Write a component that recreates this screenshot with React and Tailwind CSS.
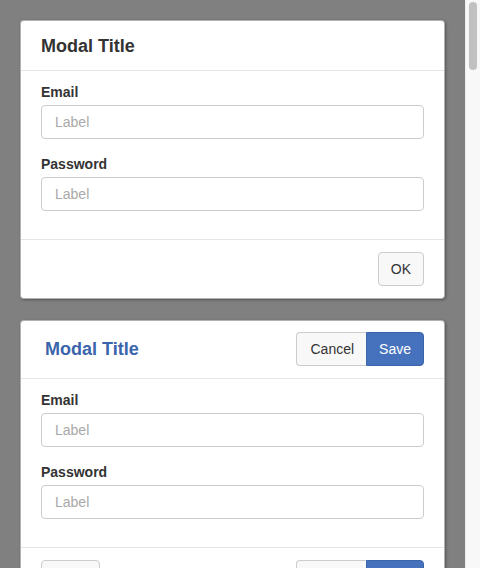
import React from 'react';

const FONT = { fontFamily: '"Liberation Sans", Arial, Helvetica, sans-serif' };

// Variants repeated down the page, like a gallery of modal layouts
const VARIANTS = ['basic', 'actions', 'basic', 'actions', 'basic', 'actions', 'basic', 'actions', 'basic', 'actions', 'basic', 'actions', 'basic', 'actions', 'basic'];

const Button = ({ children, primary, className = '' }) => (
    <button
        className={`h-[34px] text-sm leading-5 border ${primary
            ? 'bg-[#4672bd] border-[#3c64a8] text-white'
            : 'bg-[#f8f8f8] border-[#cccccc] text-[#333333]'} ${className}`}
    >
        {children}
    </button>
);

const ButtonGroup = () => (
    <div className="flex">
        <Button className="rounded-l-[4px] border-r-0 pl-[13px] pr-[12px]">Cancel</Button>
        <Button primary className="rounded-r-[4px] px-[12px]">Save</Button>
    </div>
);

const Field = ({ label, className = '' }) => (
    <div className={className}>
        <label className="block text-sm font-bold leading-5 text-[#333333] mb-[3px]">{label}</label>
        <input
            type="text"
            placeholder="Label"
            className="block w-full h-[34px] px-[13px] text-sm text-[#333333] placeholder:text-[#a9a9a9] border border-[#cccccc] rounded-[4px] bg-white outline-none"
        />
    </div>
);

const Body = () => (
    <div className="px-5 pt-[11px] pb-[28px] border-b border-[#e5e5e5]">
        <Field label="Email" />
        <Field label="Password" className="mt-[15px]" />
    </div>
);

const BasicModal = () => (
    <div className="bg-white border border-black/30 rounded-[4px] shadow-[1px_1px_3px_rgba(0,0,0,0.35)]">
        <div className="px-5 h-[50px] flex items-center border-b border-[#e5e5e5]">
            <h2 className="text-lg font-bold text-[#333333] leading-5">Modal Title</h2>
        </div>
        <Body />
        <div className="px-5 py-3 flex justify-end">
            <Button className="rounded-[4px] px-3">OK</Button>
        </div>
    </div>
);

const ActionsModal = () => (
    <div className="bg-white border border-black/30 rounded-[4px] shadow-[1px_1px_3px_rgba(0,0,0,0.35)]">
        <div className="pl-6 pr-5 pt-[11px] pb-3 flex items-center justify-between border-b border-[#e5e5e5]">
            <h2 className="text-lg font-bold text-[#3a64ab] leading-5">Modal Title</h2>
            <ButtonGroup />
        </div>
        <Body />
        <div className="px-5 py-3 flex items-center justify-between">
            <Button className="rounded-[4px] px-[13px]">Back</Button>
            <ButtonGroup />
        </div>
    </div>
);

export default function App() {
    return (
        <div className="h-screen flex bg-[#808080]" style={FONT}>
            <div className="flex-1 overflow-hidden px-5 pt-5">
                <div className="flex flex-col gap-[21px]">
                    {VARIANTS.map((v, i) => (v === 'basic' ? <BasicModal key={i} /> : <ActionsModal key={i} />))}
                </div>
            </div>
            {/* scrollbar */}
            <div className="w-[15px] shrink-0 bg-[#f8f8f8] border-l border-[#ededed] pt-[2px] flex justify-center">
                <div className="w-[8px] h-[68px] rounded-full bg-[#c1c1c1]" />
            </div>
        </div>
    );
}
